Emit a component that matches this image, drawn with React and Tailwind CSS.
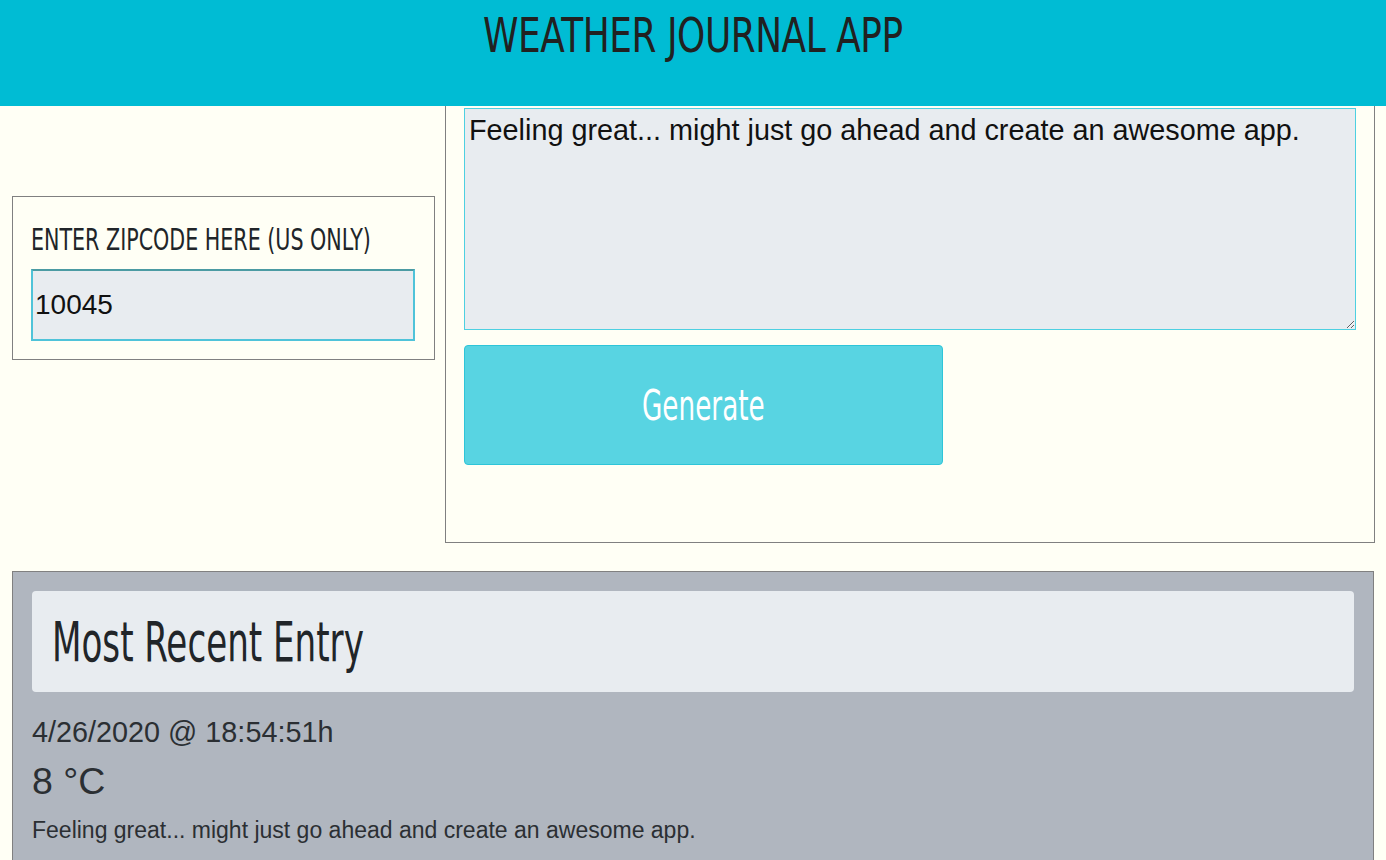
import { useState } from 'react';

const oswald = { fontFamily: '"DejaVu Sans Condensed", "DejaVu Sans", sans-serif' };

export default function App() {
  const [zip, setZip] = useState('10045');
  const [feelings, setFeelings] = useState('Feeling great... might just go ahead and create an awesome app.');

  return (
    <div className="min-h-screen bg-[#fffff5] text-[#212529]" style={{ fontFamily: '"Liberation Sans", Arial, sans-serif' }}>
      <header className="h-[106px] bg-[#00bcd4] flex justify-center">
        <h1 className="mt-[5px] text-[48px] leading-[60px] text-[#212121] scale-x-[0.83] tracking-[-0.5px] whitespace-nowrap" style={oswald}>
          WEATHER JOURNAL APP
        </h1>
      </header>

      <div className="flex items-start px-3 gap-[10px]">
        <div className="mt-[90px] w-[423px] h-[164px] border border-[#808080] px-[18px] pt-[24px]">
          <label className="block h-[48px] text-[31px] leading-[36px] text-[#212529] origin-left scale-x-[0.74] whitespace-nowrap" style={oswald}>
            ENTER ZIPCODE HERE (US ONLY)
          </label>
          <input
            className="w-[384px] h-[72px] bg-[#e8ecf0] border-2 border-[#4fc3d9] border-t-[#4b9ba3] px-[2px] text-[28px] text-[#111] outline-none"
            value={zip}
            onChange={e => setZip(e.target.value)}
          />
        </div>

        <div className="w-[930px] h-[437px] border border-t-0 border-[#808080] px-[18px] pt-[2px]">
          <textarea
            className="block w-[892px] h-[222px] bg-[#e8ecf0] border border-[#4dd0e1] px-[4px] py-[5px] text-[28.8px] leading-[32px] text-[#111] outline-none"
            value={feelings}
            onChange={e => setFeelings(e.target.value)}
          />
          <button className="mt-[15px] w-[479px] h-[120px] bg-[#58d4e2] border border-[#2ec5d8] rounded-[4px] text-white flex items-center justify-center">
            <span className="text-[43px] leading-[48px] scale-x-[0.68] whitespace-nowrap" style={oswald}>Generate</span>
          </button>
        </div>
      </div>

      <section className="mx-3 mt-[28px] border border-[#808080] bg-[#b0b6bf] px-[19px] pt-[19px] pb-10">
        <div className="h-[101px] bg-[#e8ecf0] rounded-[4px] px-5 flex items-center">
          <h2 className="text-[55px] leading-[64px] text-[#212529] origin-left scale-x-[0.69] whitespace-nowrap" style={oswald}>
            Most Recent Entry
          </h2>
        </div>
        <div className="mt-[22px] text-[28.8px] leading-[36px] text-[#2b2f33]">4/26/2020 @ 18:54:51h</div>
        <div className="mt-[9px] text-[37.5px] leading-[44px] text-[#2b2f33]">8 °C</div>
        <div className="mt-[13px] text-[23px] leading-[28px] text-[#2b2f33]">Feeling great... might just go ahead and create an awesome app.</div>
      </section>
    </div>
  );
}
